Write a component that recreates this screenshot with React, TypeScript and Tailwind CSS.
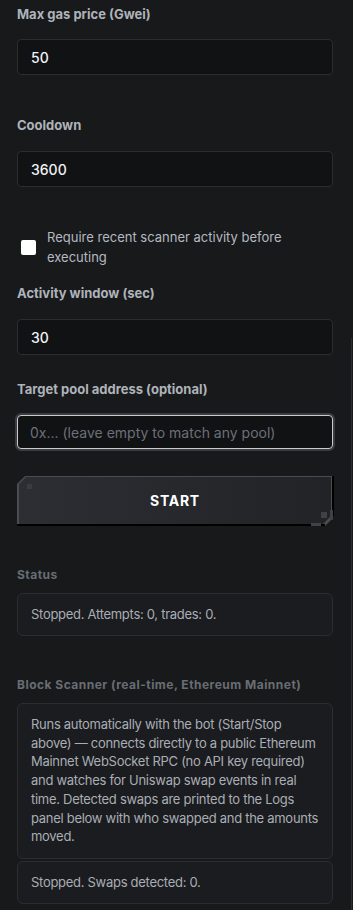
import React from "react";

const font = { fontFamily: "Inter, 'Noto Sans', 'Liberation Sans', sans-serif" };

function Label({ children }: { children: React.ReactNode }) {
  return <div className="text-[13px] leading-[18px] font-bold text-[#aeb3ba]">{children}</div>;
}

function Field({ label, children, gap }: { label: string; children: React.ReactNode; gap: string }) {
  return (
    <div className={`flex flex-col ${gap}`}>
      <Label>{label}</Label>
      {children}
    </div>
  );
}

function Input({ value, placeholder, focused }: { value?: string; placeholder?: string; focused?: boolean }) {
  if (focused) {
    return (
      <div className="rounded-[6px] border-2 border-[#3a3c40] -mx-[2px]">
        <div className="h-[34px] rounded-[4px] border border-[#c9cbcf] bg-[#111214] flex items-center px-[12px] text-[14px] text-[#6b7078]">
          {placeholder}
        </div>
      </div>
    );
  }
  return (
    <div className="h-[36px] rounded-[4px] border border-[#2a2c30] bg-[#111214] flex items-center px-[13px] text-[14px] font-medium text-[#f1f2f4]">
      {value}
    </div>
  );
}

function Box({ children, className = "" }: { children: React.ReactNode; className?: string }) {
  return (
    <div className={`rounded-[6px] border border-[#2b2d31] bg-[#1b1c1f] px-[13px] text-[13px] tracking-[-0.022em] text-[#a9aeb5] ${className}`}>
      {children}
    </div>
  );
}

function Section({ title, children }: { title: string; children: React.ReactNode }) {
  return (
    <div className="flex flex-col gap-[10px]">
      <div className="text-[12px] leading-[16px] font-bold tracking-[0.04em] text-[#696d74]">{title}</div>
      <div className="flex flex-col gap-[2px]">{children}</div>
    </div>
  );
}

export default function App() {
  return (
    <div style={font} className="relative min-h-[910px] w-[353px] bg-[#18191b] pl-[17px] pr-[20px] pt-[5px] flex flex-col overflow-hidden">
      <div className="absolute right-[1px] top-[338px] bottom-0 w-[1px] bg-[#2c2e32]" />

      <Field label="Max gas price (Gwei)" gap="gap-[16px]">
        <Input value="50" />
      </Field>

      <div className="mt-[41px]">
        <Field label="Cooldown" gap="gap-[17px]">
          <Input value="3600" />
        </Field>
      </div>

      <div className="mt-[40px] flex items-center gap-[11px] pl-[4px]">
        <div className="w-[15px] h-[15px] rounded-[2px] bg-white shrink-0" />
        <div className="text-[13px] leading-[20px] text-[#b4b9c0]">Require recent scanner activity before executing</div>
      </div>

      <div className="mt-[17px]">
        <Field label="Activity window (sec)" gap="gap-[17px]">
          <Input value="30" />
        </Field>
      </div>

      <div className="mt-[25px]">
        <Field label="Target pool address (optional)" gap="gap-[15px]">
          <Input placeholder="0x... (leave empty to match any pool)" focused />
        </Field>
      </div>

      <div className="relative mt-[25px] h-[50px]">
        <div
          className="absolute inset-0 bg-[#4a4c52]"
          style={{ clipPath: "polygon(8px 0, 100% 0, 100% calc(100% - 8px), calc(100% - 8px) 100%, 0 100%, 0 8px)" }}
        />
        <div
          className="absolute left-[2px] top-[1px] right-[2px] bottom-[2px] bg-gradient-to-r from-[#2c2e33] to-[#222327] flex items-center justify-center"
          style={{ clipPath: "polygon(7px 0, 100% 0, 100% calc(100% - 8px), calc(100% - 8px) 100%, 0 100%, 0 7px)" }}
        >
          <span className="text-[14px] font-bold tracking-[0.05em] text-white">START</span>
        </div>
        <div className="absolute left-0 right-[8px] bottom-0 h-[2px] bg-black" />
        <div className="absolute right-[-1px] top-0 bottom-[10px] w-[2px] bg-black" />
        <div className="absolute left-[10px] top-[8px] w-[5px] h-[5px] bg-[#3a3c42]" />
        <div className="absolute right-[6px] bottom-[8px] w-[6px] h-[6px] bg-[#3f4147]" />
        <div className="absolute right-[12px] bottom-0 w-[10px] h-[3px] bg-[#3f4147]" />
        <div className="absolute right-[0px] bottom-[6px] w-[3px] h-[10px] bg-[#3f4147]" />
      </div>

      <div className="mt-[41px]">
        <Section title="Status">
          <Box className="h-[43px] flex items-center">Stopped. Attempts: 0, trades: 0.</Box>
        </Section>
      </div>

      <div className="mt-[41px]">
        <Section title="Block Scanner (real-time, Ethereum Mainnet)">
          <Box className="pt-[11px] pb-[12px] leading-[18.7px]">
            Runs automatically with the bot (Start/Stop above) — connects directly to a public Ethereum Mainnet WebSocket RPC (no API key required) and watches for Uniswap swap events in real time. Detected swaps are printed to the Logs panel below with who swapped and the amounts moved.
          </Box>
          <Box className="h-[43px] flex items-center">Stopped. Swaps detected: 0.</Box>
        </Section>
      </div>
    </div>
  );
}
